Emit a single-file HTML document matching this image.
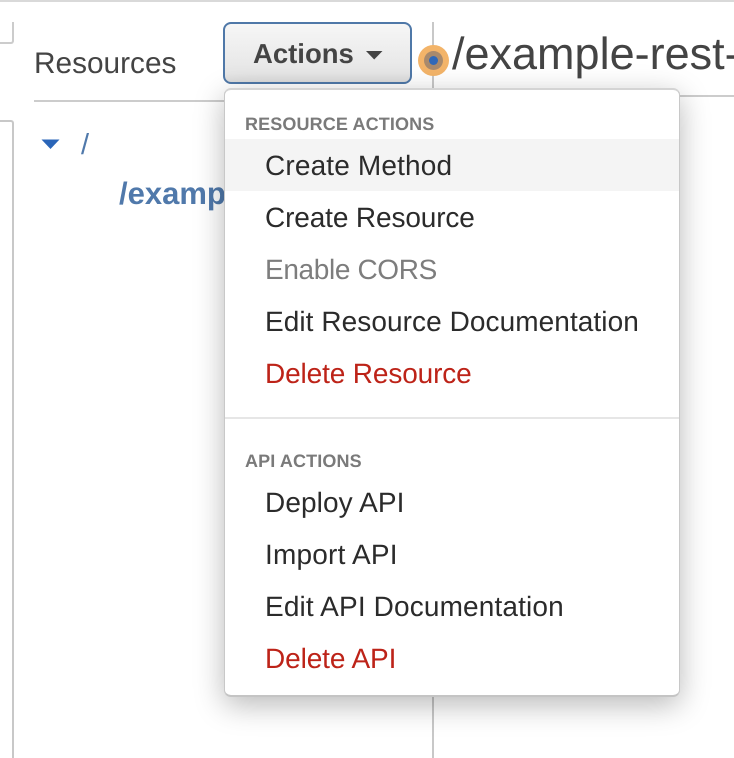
<!DOCTYPE html>
<html><head><meta charset="utf-8"><style>
html,body{margin:0;padding:0;background:#fff;width:734px;height:758px;overflow:hidden}
body{position:relative;font-family:"Liberation Sans",Arial,sans-serif;text-rendering:geometricPrecision}
div,span{position:absolute;white-space:nowrap}
.i{left:265px;font-size:28px;line-height:52px;height:52px;color:#2b2b2b}
.r{color:#bd2318}
.h{left:245px;font-size:18px;font-weight:bold;color:#7a7a7a;line-height:20px;letter-spacing:.13px}
</style></head><body>
<div style="left:0;top:0;width:734px;height:2px;background:#d9d9d9"></div>
<div style="left:-4px;top:22px;width:16px;height:20px;border:1px solid #ccc;border-width:0 2px 2px 0;border-radius:0 0 3px 0"></div>
<div style="left:-4px;top:120px;width:16px;height:636px;border:solid #c8c8c8;border-width:2px 2px 0 0;border-radius:0 3px 0 0"></div>
<div style="left:34px;top:46px;font-size:29.8px;line-height:36px;color:#444">Resources</div>
<div style="left:34px;top:100px;width:200px;height:2px;background:#ccc"></div>
<svg style="position:absolute;left:41px;top:139px" width="19" height="11"><path d="M0.5 0.5H18.5L9.5 10Z" fill="#2a65b8"/></svg>
<div style="left:81px;top:128px;font-size:29px;line-height:34px;color:#5079ab">/</div>
<div style="left:119px;top:177px;font-size:31px;line-height:34px;font-weight:bold;color:#5079ab">/examp</div>
<div style="left:223px;top:22px;width:185px;height:58px;border:2px solid #4f78a8;border-radius:8px;background:linear-gradient(#f6f6f6,#e6e6e6 85%,#dcdcdc)"></div>
<div style="left:253px;top:37px;font-size:27.5px;line-height:34px;font-weight:bold;color:#444">Actions</div>
<svg style="position:absolute;left:366px;top:51px" width="17" height="10"><path d="M0 0H16.5L8.2 8.5Z" fill="#444"/></svg>
<div style="left:432px;top:22px;width:2px;height:736px;background:#c8c8c8"></div>
<div style="left:432px;top:95px;width:302px;height:2px;background:#ccc"></div>
<div style="left:418px;top:45px;width:31px;height:31px;border-radius:50%;background:#f3b469"></div>
<div style="left:424px;top:51px;width:19px;height:19px;border-radius:50%;background:#a98a6c"></div>
<div style="left:429px;top:56px;width:9px;height:9px;border-radius:50%;background:#2f68b8"></div>
<div style="left:452px;top:28px;font-size:45px;line-height:52px;color:#444">/example-rest-</div>
<div style="left:224px;top:88px;width:454px;height:605px;background:#fff;border:1px solid #c8c8c8;border-top:2px solid #d4d4d4;border-bottom:2px solid #c4c4c4;border-radius:7px;box-shadow:0 8px 30px rgba(0,0,0,.28)"></div>
<div style="left:225px;top:139px;width:454px;height:52px;background:#f4f4f4"></div>
<div class="h" style="top:114px">RESOURCE ACTIONS</div>
<div class="i" style="top:140px;letter-spacing:.15px">Create Method</div>
<div class="i" style="top:192px;letter-spacing:-.13px">Create Resource</div>
<div class="i" style="top:244px;color:#7d7d7d;letter-spacing:-.36px">Enable CORS</div>
<div class="i" style="top:296px;letter-spacing:.07px">Edit Resource Documentation</div>
<div class="i r" style="top:348px;letter-spacing:-.13px">Delete Resource</div>
<div style="left:225px;top:417px;width:454px;height:2px;background:#e6e6e6"></div>
<div class="h" style="top:451px">API ACTIONS</div>
<div class="i" style="top:477px;letter-spacing:.1px">Deploy API</div>
<div class="i" style="top:529px;letter-spacing:.2px">Import API</div>
<div class="i" style="top:581px;letter-spacing:.14px">Edit API Documentation</div>
<div class="i r" style="top:633px;letter-spacing:-.1px">Delete API</div>
</body></html>
